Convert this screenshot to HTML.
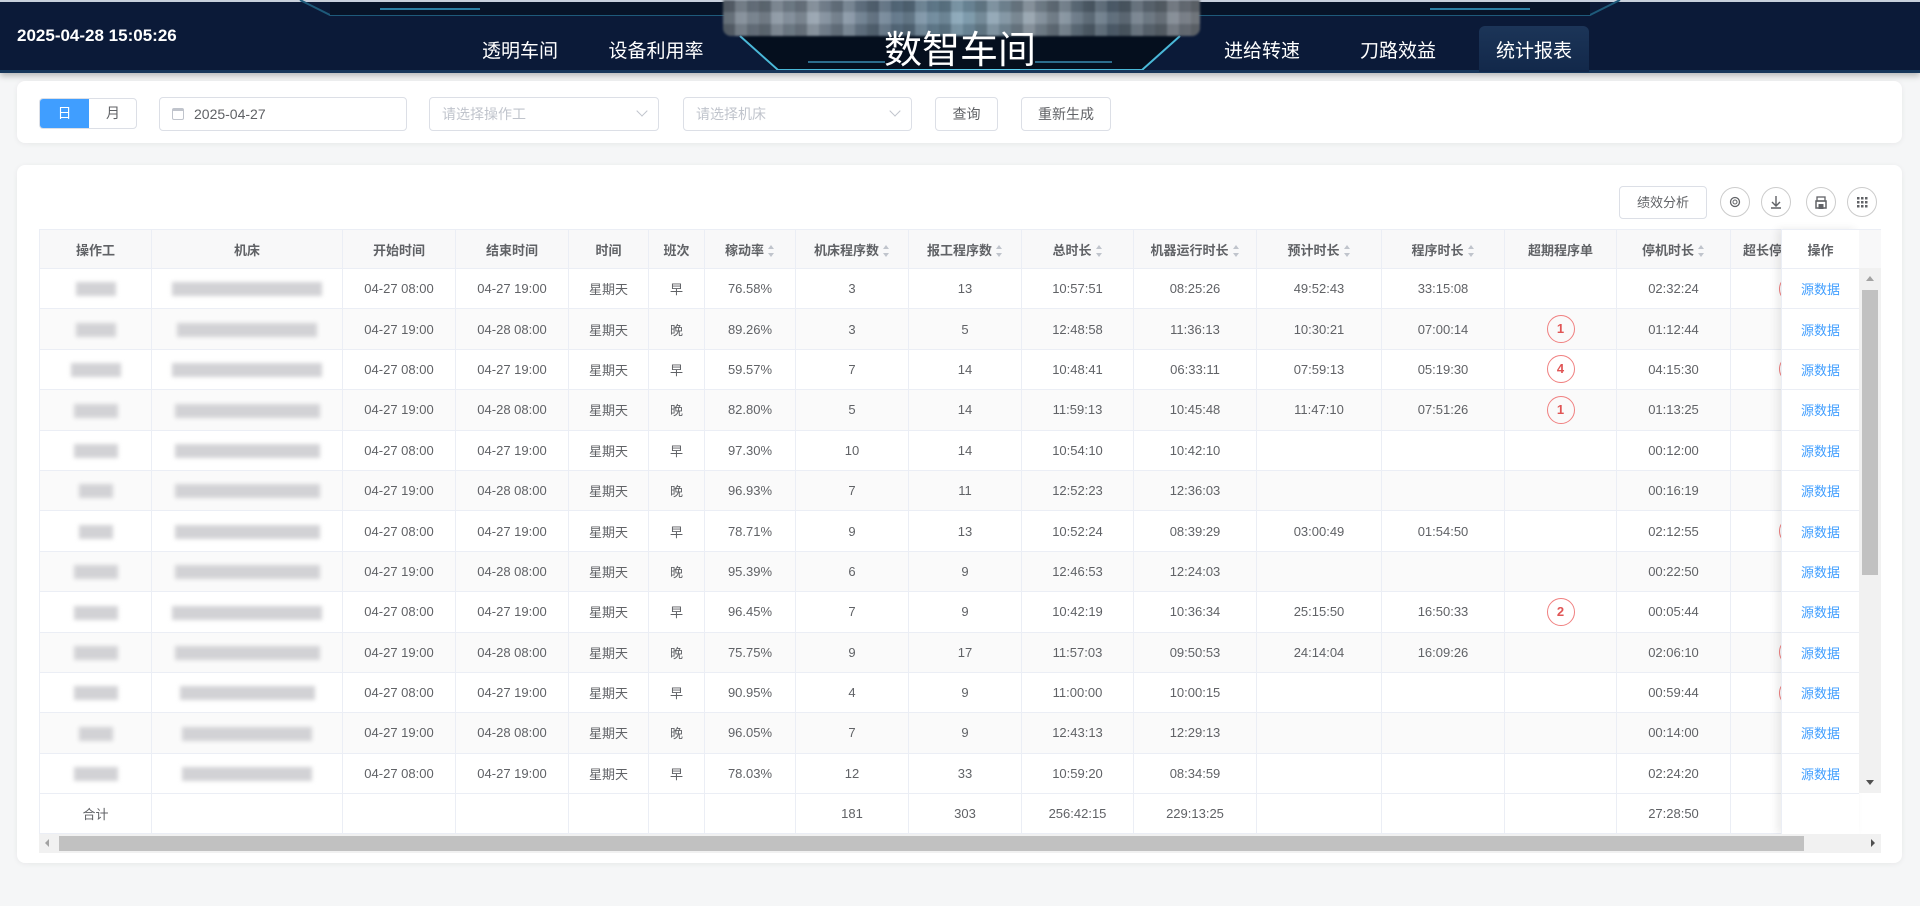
<!DOCTYPE html>
<html><head><meta charset="utf-8"><style>
*{box-sizing:border-box;margin:0;padding:0}
body{width:1920px;height:922px;background:#f5f6f7;font-family:"Liberation Sans","Noto Sans CJK SC",sans-serif;position:relative;overflow:hidden;color:#606266}
.hdr{position:absolute;left:0;top:0;width:1920px;height:73px;background:#0b1a38;box-shadow:0 3px 6px rgba(0,0,0,.25)}
.nav{position:absolute;top:36px;color:#fff;font-size:19px;transform:translateX(-50%)}
.card{position:absolute;background:#fff;border-radius:8px;box-shadow:0 1px 6px rgba(0,0,0,.06)}
.inp{position:absolute;height:34px;border:1px solid #dcdfe6;border-radius:4px;font-size:14px;line-height:32px;padding-left:12px;color:#c0c4cc;background:#fff}
.btn{position:absolute;height:34px;border:1px solid #dcdfe6;border-radius:4px;font-size:14px;line-height:32px;text-align:center;color:#606266;background:#fff}
.chev{position:absolute;right:12px;top:9px;width:8px;height:8px;border-right:1px solid #c0c4cc;border-bottom:1px solid #c0c4cc;transform:rotate(45deg)}
.circ{position:absolute;width:30px;height:30px;border:1px solid #ccc;border-radius:50%;top:188px}
table{border-collapse:collapse;table-layout:fixed;font-size:13px}
td,th{border:1px solid #ebeef5;text-align:center;height:40.4px;padding:0;white-space:nowrap;overflow:hidden}
th{height:39px;background:#f8f8f9;color:#606266;font-weight:bold;font-size:13px}
tr:nth-child(odd) td{background:#fafafa}
.s{display:inline-block;vertical-align:middle;margin-left:4px;width:7px;height:12px;position:relative}
.s:before,.s:after{content:"";position:absolute;left:0;border-left:3.5px solid transparent;border-right:3.5px solid transparent}
.s:before{top:0;border-bottom:4px solid #c0c4cc}.s:after{bottom:0;border-top:4px solid #c0c4cc}
.r{display:inline-block;width:28px;height:28px;border:1px solid #f08080;border-radius:50%;color:#e05555;font-weight:bold;line-height:26px;font-size:13px;text-align:center}
.b{display:inline-block;height:14px;background:#d2d2d5;filter:blur(2px);vertical-align:middle}
.fx td,.fx th{background:#fff!important}
.fx td{color:#409eff}
.cl{text-align:left!important;padding-left:48px!important}
</style></head><body>
<div class="hdr">
<svg width="1920" height="73" style="position:absolute;left:0;top:0">
<rect x="0" y="0" width="1920" height="2" fill="#c8d0dc"/>
<polyline points="300,0 330,15 1590,15 1620,0" fill="none" stroke="#1e5a7a" stroke-width="2"/>
<rect x="330" y="2" width="1260" height="13" fill="#071428"/>
<line x1="380" y1="9" x2="480" y2="9" stroke="#2b7fa5" stroke-width="2"/>
<line x1="1430" y1="9" x2="1530" y2="9" stroke="#2b7fa5" stroke-width="2"/>
<polygon points="740,34 775,70 1145,70 1180,34" fill="#050f1e"/>
<polyline points="740,36 778,70 1142,70 1180,36" fill="none" stroke="#4ab8d8" stroke-width="2"/>
<line x1="808" y1="62" x2="885" y2="62" stroke="#3a8bb0" stroke-width="1.5"/>
<line x1="1035" y1="62" x2="1112" y2="62" stroke="#3a8bb0" stroke-width="1.5"/>
<rect x="900" y="69" width="120" height="3" fill="#5fd0f0"/>
<rect x="0" y="70" width="1920" height="3" fill="#16365a"/>
</svg>
<div style="position:absolute;left:723px;top:0;width:477px;height:36px;border-radius:0 0 8px 8px;overflow:hidden;background:linear-gradient(90deg,#6a7682,#8a98a6 20%,#5e7488 35%,#7a9cb0 50%,#8896a2 65%,#566878 80%,#7a8088);filter:blur(1px)">
<div style="position:absolute;inset:0;background:repeating-linear-gradient(90deg,rgba(0,0,0,.15) 0 12px,rgba(255,255,255,.1) 12px 24px,rgba(0,0,0,.05) 24px 36px),repeating-linear-gradient(0deg,rgba(0,0,0,.12) 0 12px,rgba(255,255,255,.08) 12px 24px)"></div></div>
<div style="position:absolute;left:17px;top:26px;color:#fff;font-size:17px;font-weight:bold">2025-04-28 15:05:26</div>
<div class="nav" style="left:520px">透明车间</div>
<div class="nav" style="left:656px">设备利用率</div>
<div style="position:absolute;left:960px;top:29px;transform:translateX(-50%);color:#fff;font-size:38px;line-height:44px">数智车间</div>
<div class="nav" style="left:1262px">进给转速</div>
<div class="nav" style="left:1398px">刀路效益</div>
<div style="position:absolute;left:1479px;top:26px;width:110px;height:46px;border-radius:6px 6px 0 0;background:linear-gradient(#1c3558,#12284a)"></div>
<div class="nav" style="left:1534px">统计报表</div>
</div>

<div class="card" style="left:17px;top:81px;width:1885px;height:62px">
<div style="position:absolute;left:22px;top:17px;width:98px;height:31px;border:1px solid #dcdfe6;border-radius:4px;overflow:hidden;font-size:14px;line-height:29px">
<div style="position:absolute;left:0;top:0;width:49px;height:29px;background:#409eff;color:#fff;text-align:center">日</div>
<div style="position:absolute;left:49px;top:0;width:48px;text-align:center;color:#606266">月</div></div>
<div class="inp" style="left:142px;top:16px;width:248px;color:#606266;padding-left:34px"><span style="position:absolute;left:12px;top:10px;width:12px;height:12px;border:1px solid #c0c4cc;border-top-width:3px;border-radius:2px"></span>2025-04-27</div>
<div class="inp" style="left:412px;top:16px;width:230px">请选择操作工<span class="chev"></span></div>
<div class="inp" style="left:666px;top:16px;width:229px">请选择机床<span class="chev"></span></div>
<div class="btn" style="left:918px;top:16px;width:63px">查询</div>
<div class="btn" style="left:1004px;top:16px;width:90px">重新生成</div>
</div>

<div class="card" style="left:17px;top:165px;width:1885px;height:698px">
<div class="btn" style="left:1602px;top:21px;width:88px;height:33px;font-size:13px">绩效分析</div>
<div class="circ" style="left:1703px;top:22px"><svg width="28" height="28"><circle cx="14" cy="14" r="4.5" fill="none" stroke="#606266" stroke-width="1.3"/><circle cx="14" cy="14" r="2" fill="none" stroke="#606266"/></svg></div>
<div class="circ" style="left:1744px;top:22px"><svg width="28" height="28"><path d="M14 8v10M10 14l4 4 4-4M9 20h10" fill="none" stroke="#606266" stroke-width="1.4"/></svg></div>
<div class="circ" style="left:1789px;top:22px"><svg width="28" height="28"><rect x="10" y="9" width="8" height="4" fill="none" stroke="#606266" stroke-width="1.3"/><rect x="9" y="13" width="10" height="7" fill="none" stroke="#606266" stroke-width="1.5"/><rect x="11.5" y="16" width="5" height="5" fill="#606266"/></svg></div>
<div class="circ" style="left:1830px;top:22px"><svg width="28" height="28"><g fill="#606266"><rect x="9" y="9" width="2.5" height="2.5"/><rect x="13" y="9" width="2.5" height="2.5"/><rect x="17" y="9" width="2.5" height="2.5"/><rect x="9" y="13" width="2.5" height="2.5"/><rect x="13" y="13" width="2.5" height="2.5"/><rect x="17" y="13" width="2.5" height="2.5"/><rect x="9" y="17" width="2.5" height="2.5"/><rect x="13" y="17" width="2.5" height="2.5"/><rect x="17" y="17" width="2.5" height="2.5"/></g></svg></div>
</div>

<div style="position:absolute;left:39px;top:229px;width:1742px;height:605px;overflow:hidden">
<table style="width:1828px">
<colgroup><col style="width:112px"><col style="width:191px"><col style="width:113px"><col style="width:113px"><col style="width:80px"><col style="width:56px"><col style="width:91px"><col style="width:113px"><col style="width:113px"><col style="width:112px"><col style="width:123px"><col style="width:125px"><col style="width:123px"><col style="width:112px"><col style="width:114px"><col style="width:137px"></colgroup>
<tr><th>操作工</th><th>机床</th><th>开始时间</th><th>结束时间</th><th>时间</th><th>班次</th><th>稼动率<i class="s"></i></th><th>机床程序数<i class="s"></i></th><th>报工程序数<i class="s"></i></th><th>总时长<i class="s"></i></th><th>机器运行时长<i class="s"></i></th><th>预计时长<i class="s"></i></th><th>程序时长<i class="s"></i></th><th>超期程序单</th><th>停机时长<i class="s"></i></th><th style="text-align:left;padding-left:12px">超长停机</th></tr>
<tr><td><i class="b" style="width:40px"></i></td><td><i class="b" style="width:150px"></i></td><td>04-27 08:00</td><td>04-27 19:00</td><td>星期天</td><td>早</td><td>76.58%</td><td>3</td><td>13</td><td>10:57:51</td><td>08:25:26</td><td>49:52:43</td><td>33:15:08</td><td></td><td>02:32:24</td><td class="cl"><span class="r">1</span></td></tr>
<tr><td><i class="b" style="width:40px"></i></td><td><i class="b" style="width:140px"></i></td><td>04-27 19:00</td><td>04-28 08:00</td><td>星期天</td><td>晚</td><td>89.26%</td><td>3</td><td>5</td><td>12:48:58</td><td>11:36:13</td><td>10:30:21</td><td>07:00:14</td><td><span class="r">1</span></td><td>01:12:44</td><td></td></tr>
<tr><td><i class="b" style="width:50px"></i></td><td><i class="b" style="width:150px"></i></td><td>04-27 08:00</td><td>04-27 19:00</td><td>星期天</td><td>早</td><td>59.57%</td><td>7</td><td>14</td><td>10:48:41</td><td>06:33:11</td><td>07:59:13</td><td>05:19:30</td><td><span class="r">4</span></td><td>04:15:30</td><td class="cl"><span class="r">2</span></td></tr>
<tr><td><i class="b" style="width:44px"></i></td><td><i class="b" style="width:145px"></i></td><td>04-27 19:00</td><td>04-28 08:00</td><td>星期天</td><td>晚</td><td>82.80%</td><td>5</td><td>14</td><td>11:59:13</td><td>10:45:48</td><td>11:47:10</td><td>07:51:26</td><td><span class="r">1</span></td><td>01:13:25</td><td></td></tr>
<tr><td><i class="b" style="width:44px"></i></td><td><i class="b" style="width:145px"></i></td><td>04-27 08:00</td><td>04-27 19:00</td><td>星期天</td><td>早</td><td>97.30%</td><td>10</td><td>14</td><td>10:54:10</td><td>10:42:10</td><td></td><td></td><td></td><td>00:12:00</td><td></td></tr>
<tr><td><i class="b" style="width:34px"></i></td><td><i class="b" style="width:145px"></i></td><td>04-27 19:00</td><td>04-28 08:00</td><td>星期天</td><td>晚</td><td>96.93%</td><td>7</td><td>11</td><td>12:52:23</td><td>12:36:03</td><td></td><td></td><td></td><td>00:16:19</td><td></td></tr>
<tr><td><i class="b" style="width:34px"></i></td><td><i class="b" style="width:145px"></i></td><td>04-27 08:00</td><td>04-27 19:00</td><td>星期天</td><td>早</td><td>78.71%</td><td>9</td><td>13</td><td>10:52:24</td><td>08:39:29</td><td>03:00:49</td><td>01:54:50</td><td></td><td>02:12:55</td><td class="cl"><span class="r">2</span></td></tr>
<tr><td><i class="b" style="width:44px"></i></td><td><i class="b" style="width:145px"></i></td><td>04-27 19:00</td><td>04-28 08:00</td><td>星期天</td><td>晚</td><td>95.39%</td><td>6</td><td>9</td><td>12:46:53</td><td>12:24:03</td><td></td><td></td><td></td><td>00:22:50</td><td></td></tr>
<tr><td><i class="b" style="width:44px"></i></td><td><i class="b" style="width:150px"></i></td><td>04-27 08:00</td><td>04-27 19:00</td><td>星期天</td><td>早</td><td>96.45%</td><td>7</td><td>9</td><td>10:42:19</td><td>10:36:34</td><td>25:15:50</td><td>16:50:33</td><td><span class="r">2</span></td><td>00:05:44</td><td></td></tr>
<tr><td><i class="b" style="width:44px"></i></td><td><i class="b" style="width:145px"></i></td><td>04-27 19:00</td><td>04-28 08:00</td><td>星期天</td><td>晚</td><td>75.75%</td><td>9</td><td>17</td><td>11:57:03</td><td>09:50:53</td><td>24:14:04</td><td>16:09:26</td><td></td><td>02:06:10</td><td class="cl"><span class="r">1</span></td></tr>
<tr><td><i class="b" style="width:44px"></i></td><td><i class="b" style="width:135px"></i></td><td>04-27 08:00</td><td>04-27 19:00</td><td>星期天</td><td>早</td><td>90.95%</td><td>4</td><td>9</td><td>11:00:00</td><td>10:00:15</td><td></td><td></td><td></td><td>00:59:44</td><td class="cl"><span class="r">1</span></td></tr>
<tr><td><i class="b" style="width:34px"></i></td><td><i class="b" style="width:130px"></i></td><td>04-27 19:00</td><td>04-28 08:00</td><td>星期天</td><td>晚</td><td>96.05%</td><td>7</td><td>9</td><td>12:43:13</td><td>12:29:13</td><td></td><td></td><td></td><td>00:14:00</td><td></td></tr>
<tr><td><i class="b" style="width:44px"></i></td><td><i class="b" style="width:130px"></i></td><td>04-27 08:00</td><td>04-27 19:00</td><td>星期天</td><td>早</td><td>78.03%</td><td>12</td><td>33</td><td>10:59:20</td><td>08:34:59</td><td></td><td></td><td></td><td>02:24:20</td><td></td></tr>
<tr><td style="background:#fff">合计</td><td style="background:#fff"></td><td style="background:#fff"></td><td style="background:#fff"></td><td style="background:#fff"></td><td style="background:#fff"></td><td style="background:#fff"></td><td style="background:#fff">181</td><td style="background:#fff">303</td><td style="background:#fff">256:42:15</td><td style="background:#fff">229:13:25</td><td style="background:#fff"></td><td style="background:#fff"></td><td style="background:#fff"></td><td style="background:#fff">27:28:50</td><td style="background:#fff"></td></tr>
</table></div>

<div style="position:absolute;left:1781px;top:229px;width:78px;height:605px;background:#fff;box-shadow:-4px 0 8px rgba(0,0,0,.08);overflow:hidden">
<table class="fx" style="width:79px"><tr><th>操作</th></tr>
<tr><td>源数据</td></tr><tr><td>源数据</td></tr><tr><td>源数据</td></tr><tr><td>源数据</td></tr><tr><td>源数据</td></tr><tr><td>源数据</td></tr><tr><td>源数据</td></tr><tr><td>源数据</td></tr><tr><td>源数据</td></tr><tr><td>源数据</td></tr><tr><td>源数据</td></tr><tr><td>源数据</td></tr><tr><td>源数据</td></tr><tr><td style="height:150px"></td></tr></table></div>

<div style="position:absolute;left:1859px;top:229px;width:22px;height:39px;background:#f8f8f9;border-top:1px solid #ebeef5"></div>
<div style="position:absolute;left:1859px;top:268px;width:22px;height:525px;background:#f1f1f1">
<div style="position:absolute;left:7px;top:8px;border-left:4px solid transparent;border-right:4px solid transparent;border-bottom:5px solid #a3a3a3"></div>
<div style="position:absolute;left:3px;top:22px;width:16px;height:285px;background:#c1c1c1"></div>
<div style="position:absolute;left:7px;bottom:8px;border-left:4px solid transparent;border-right:4px solid transparent;border-top:5px solid #505050"></div></div>
<div style="position:absolute;left:39px;top:834px;width:1842px;height:19px;background:#f1f1f1">
<div style="position:absolute;left:6px;top:5px;border-top:4px solid transparent;border-bottom:4px solid transparent;border-right:4px solid #a3a3a3"></div>
<div style="position:absolute;left:20px;top:2px;width:1745px;height:15px;background:#c1c1c1"></div>
<div style="position:absolute;right:6px;top:5px;border-top:4px solid transparent;border-bottom:4px solid transparent;border-left:4px solid #505050"></div></div>
<div style="position:absolute;left:0;top:906px;width:1920px;height:16px;background:#fff"></div>
</body></html>
